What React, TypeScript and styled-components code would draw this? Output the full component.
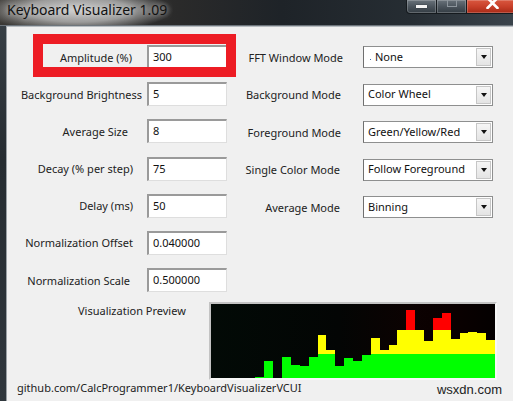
import React from "react";
import styled, { createGlobalStyle } from "styled-components";

const GlobalStyle = createGlobalStyle`
  html, body { margin: 0; padding: 0; }
  body {
    width: 513px;
    height: 401px;
    overflow: hidden;
    background: #f0f0f0;
    font-family: "Noto Sans", "DejaVu Sans", sans-serif;
  }
`;

const Window = styled.div`
  position: relative;
  width: 513px;
  height: 401px;
  display: flex;
  flex-direction: column;
  background: linear-gradient(180deg, #3a4248 0%, #262c31 40%, #30373d 100%);
  overflow: hidden;
`;

const TitleBar = styled.div`
  height: 25px;
  flex: 0 0 25px;
  display: flex;
  align-items: flex-start;
  background:
    radial-gradient(ellipse 95px 22px at 78px 10px, rgba(214, 214, 214, 0.95) 0%, rgba(190, 190, 190, 0.75) 55%, rgba(150, 150, 150, 0) 100%),
    linear-gradient(90deg, #3c3a36 0%, #2a2a2a 35%, #1e2328 55%, #262d33 80%, #3a434b 100%);
  border-bottom: 1px solid #6d757c;
`;

const Title = styled.div`
  padding-left: 7px;
  font-size: 14px;
  line-height: 20px;
  color: #111;
  text-shadow: 0 0 6px rgba(230, 230, 230, 0.9);
  white-space: nowrap;
`;

const CaptionGroup = styled.div`
  margin-left: auto;
  margin-right: -6px;
  display: flex;
  height: 14px;
`;

const CaptionButton = styled.div<{ $w: number; $kind: "min" | "max" | "close" }>`
  width: ${(p) => p.$w}px;
  height: 14px;
  box-sizing: border-box;
  display: flex;
  justify-content: center;
  align-items: flex-start;
  border: 1px solid #151a1e;
  border-top: none;
  margin-left: -1px;
  box-shadow: inset 0 0 0 1px rgba(255, 255, 255, 0.22);
  background: ${(p) =>
    p.$kind === "close"
      ? "linear-gradient(180deg, #d9573f 0%, #c8402a 50%, #a82a17 100%)"
      : "linear-gradient(180deg, #6a737b 0%, #4b545c 50%, #343c43 100%)"};
  border-bottom-left-radius: ${(p) => (p.$kind === "min" ? "4px" : "0")};
`;

const MinGlyph = styled.div`
  width: 11px;
  height: 3px;
  margin-top: 5px;
  background: #f4f4f4;
  box-shadow: 0 0 1px #000;
`;

const MaxGlyph = styled.div`
  width: 8px;
  height: 6px;
  border: 1px solid #8d959c;
  border-top: none;
`;

const PreviewRow = styled.div`
  display: flex;
  margin-top: 10px;
`;

const ClientRow = styled.div`
  flex: 1;
  display: flex;
  padding-left: 6px;
  min-height: 0;
`;

const Body = styled.div`
  flex: 1;
  display: flex;
  flex-direction: column;
  background: #f0f0f0;
  border-left: 1px solid #9aa0a5;
  border-top: 1px solid #b7bcc0;
  padding-top: 18px;
  font-size: 11px;
  color: #1e1e1e;
  overflow: hidden;
`;

const Forms = styled.div`
  display: flex;
  align-items: flex-start;
`;

const LeftForm = styled.div`
  display: grid;
  grid-template-columns: 140px 80px;
  grid-auto-rows: 24px;
  row-gap: 13.2px;
`;

const RightForm = styled.div`
  display: grid;
  grid-template-columns: 133px 130px;
  grid-auto-rows: 22px;
  row-gap: 15.6px;
  margin-left: 3px;
  margin-top: 1px;
`;

const Label = styled.div<{ $pr: number }>`
  display: flex;
  align-items: center;
  justify-content: flex-end;
  padding-right: ${(p) => p.$pr}px;
  white-space: nowrap;
  color: #222;
`;

const TextBox = styled.div`
  box-sizing: border-box;
  background: #fff;
  border-top: 2px solid #9a9a9a;
  border-left: 2px solid #9a9a9a;
  border-right: 1px solid #dedede;
  border-bottom: 1px solid #dedede;
  padding-left: 4px;
  display: flex;
  align-items: center;
  padding-bottom: 2px;
  color: #111;
`;

const Select = styled.div`
  box-sizing: border-box;
  background: #fff;
  border: 1px solid #8e8f8f;
  border-left-color: #6f6f6f;
  display: flex;
  align-items: center;
  padding-left: 4px;
  padding-right: 1px;
  color: #111;
`;

const SelectText = styled.div`
  flex: 1;
  white-space: nowrap;
  overflow: hidden;
  padding-bottom: 2px;
  display: flex;
  align-items: center;
`;

const FocusDot = styled.span`
  display: inline-block;
  width: 1px;
  height: 1px;
  background: #3a6fb0;
  margin: 7px 4px 0 2px;
`;

const DropButton = styled.div`
  width: 15px;
  height: 18px;
  box-sizing: border-box;
  border: 1px solid #c6c6c6;
  background: linear-gradient(180deg, #f6f6f6 0%, #e4e4e4 100%);
  display: flex;
  align-items: center;
  justify-content: center;
`;

const Arrow = styled.div`
  width: 0;
  height: 0;
  border-left: 3.5px solid transparent;
  border-right: 3.5px solid transparent;
  border-top: 4px solid #111;
`;

const PreviewLabel = styled.div`
  width: 202px;
  box-sizing: border-box;
  padding-left: 71px;
  padding-top: 1px;
  line-height: 16px;
  white-space: nowrap;
  color: #222;
`;

const Chart = styled.div`
  width: 288px;
  height: 78px;
  box-sizing: border-box;
  border-top: 2px solid #c3c3c3;
  border-left: 2px solid #c3c3c3;
  border-right: 2px solid #f8f8f8;
  border-bottom: 2px solid #f8f8f8;
  background: linear-gradient(90deg, #020a06 0%, #030504 45%, #0c0202 70%, #0a0000 85%, #040000 100%);
  display: flex;
  align-items: flex-end;
`;

const Bar = styled.div`
  flex: 1;
  background: linear-gradient(0deg, #00ff00 0px, #00ff00 24px, #ffff00 24px, #ffff00 48px, #ff0000 48px);
`;

const Footer = styled.div`
  display: flex;
  justify-content: space-between;
  align-items: flex-start;
  padding-left: 10px;
  padding-right: 11px;
  line-height: 16px;
`;

const Link = styled.div`
  white-space: nowrap;
  color: #222;
`;

const Watermark = styled.div`
  white-space: nowrap;
  color: #222;
  margin-top: 2px;
  font-family: "Liberation Sans", Arial, sans-serif;
  font-size: 13px;
`;

const Highlight = styled.div`
  position: absolute;
  left: 33px;
  top: 34px;
  width: 203px;
  height: 43px;
  box-sizing: border-box;
  border: 10px solid #ed1c24;
  pointer-events: none;
`;

const leftRows: { label: string; value: string; pr: number }[] = [
  { label: "Amplitude (%)", value: "300", pr: 15 },
  { label: "Background Brightness", value: "5", pr: 5 },
  { label: "Average Size", value: "8", pr: 19 },
  { label: "Decay (% per step)", value: "75", pr: 14 },
  { label: "Delay (ms)", value: "50", pr: 14 },
  { label: "Normalization Offset", value: "0.040000", pr: 14 },
  { label: "Normalization Scale", value: "0.500000", pr: 17 },
];

const rightRows: { label: string; value: string; pr: number; dot?: boolean }[] = [
  { label: "FFT Window Mode", value: "None", pr: 20, dot: true },
  { label: "Background Mode", value: "Color Wheel", pr: 22 },
  { label: "Foreground Mode", value: "Green/Yellow/Red", pr: 22 },
  { label: "Single Color Mode", value: "Follow Foreground", pr: 23 },
  { label: "Average Mode", value: "Binning", pr: 23 },
];

const bars = [
  0, 0, 0, 0, 0, 1, 17, 0, 21, 13, 12, 21, 43, 28, 12, 20,
  17, 23, 40, 28, 33, 48, 68, 48, 37, 60, 65, 39, 45, 46, 45, 38,
];

export default function App() {
  return (
    <>
      <GlobalStyle />
      <Window>
        <TitleBar>
          <Title>Keyboard Visualizer 1.09</Title>
          <CaptionGroup>
            <CaptionButton $w={31} $kind="min">
              <MinGlyph />
            </CaptionButton>
            <CaptionButton $w={31} $kind="max">
              <MaxGlyph />
            </CaptionButton>
            <CaptionButton $w={53} $kind="close">
              <svg width="13" height="9" viewBox="0 0 13 9">
                <path d="M1.5 -2 L11.5 8 M11.5 -2 L1.5 8" stroke="#fff" strokeWidth="2.6" strokeLinecap="round" />
              </svg>
            </CaptionButton>
          </CaptionGroup>
        </TitleBar>
        <ClientRow>
          <Body>
            <Forms>
              <LeftForm>
                {leftRows.map((r) => (
                  <React.Fragment key={r.label}>
                    <Label $pr={r.pr}>{r.label}</Label>
                    <TextBox>{r.value}</TextBox>
                  </React.Fragment>
                ))}
              </LeftForm>
              <RightForm>
                {rightRows.map((r) => (
                  <React.Fragment key={r.label}>
                    <Label $pr={r.pr}>{r.label}</Label>
                    <Select>
                      <SelectText>
                        {r.dot && <FocusDot />}
                        {r.value}
                      </SelectText>
                      <DropButton>
                        <Arrow />
                      </DropButton>
                    </Select>
                  </React.Fragment>
                ))}
              </RightForm>
            </Forms>
            <PreviewRow>
              <PreviewLabel>Visualization Preview</PreviewLabel>
              <Chart>
                {bars.map((h, i) => (
                  <Bar key={i} style={{ height: `${h}px` }} />
                ))}
              </Chart>
            </PreviewRow>
            <Footer>
              <Link>github.com/CalcProgrammer1/KeyboardVisualizerVCUI</Link>
              <Watermark>wsxdn.com</Watermark>
            </Footer>
          </Body>
        </ClientRow>
        <Highlight />
      </Window>
    </>
  );
}
